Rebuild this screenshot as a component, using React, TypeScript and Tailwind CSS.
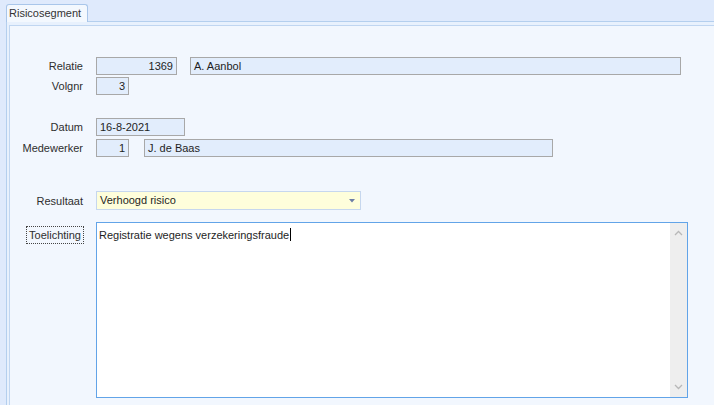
import React from "react";

const font = { fontFamily: '"Liberation Sans", Arial, sans-serif' };

function Label({ children }: { children: React.ReactNode }) {
  return (
    <div className="w-[74px] shrink-0 pr-[1px] text-right text-[11px] leading-[18px] text-[#2e2e2e]">
      {children}
    </div>
  );
}

function Box({
  w,
  align = "left",
  children,
  className = "",
}: {
  w: string;
  align?: "left" | "right";
  children: React.ReactNode;
  className?: string;
}) {
  return (
    <div
      className={`${w} h-[18px] shrink-0 border border-[#a8a8a8] bg-[#e2edfc] px-[3px] text-[11px] leading-[16px] text-[#1e1e1e] ${
        align === "right" ? "text-right" : "text-left"
      } ${className}`}
    >
      {children}
    </div>
  );
}

export default function App() {
  return (
    <div
      className="h-[405px] w-[714px] overflow-hidden bg-[#dfeafc] flex flex-col"
      style={font}
    >
      <div className="pl-[6px] pt-[4px] relative z-10">
        <div className="h-[18px] w-[82px] rounded-t-[3px] border border-b-0 border-[#a9c6ea] bg-[#f3f8fe] pl-[2px] text-[11px] leading-[16px] text-[#333]">
          Risicosegment
        </div>
      </div>
      <div className="-mt-[1px] ml-[6px] flex flex-1 flex-col border-l border-t border-[#b4cfee] bg-[#e8f1fd] pl-[2px] pt-[3px]">
        <div className="flex flex-1 flex-col border-l border-t border-[#c0d6f1] bg-[#f2f7fe]">
          {/* Relatie */}
          <div className="mt-[31px] flex items-center">
            <Label>Relatie</Label>
            <div className="w-[12px] shrink-0" />
            <Box w="w-[81px]" align="right">1369</Box>
            <div className="w-[13px] shrink-0" />
            <Box w="w-[491px]">A. Aanbol</Box>
          </div>
          {/* Volgnr */}
          <div className="mt-[2px] flex items-center">
            <Label>Volgnr</Label>
            <div className="w-[12px] shrink-0" />
            <Box w="w-[33px]" align="right">3</Box>
          </div>
          {/* Datum */}
          <div className="mt-[23px] flex items-center">
            <Label>Datum</Label>
            <div className="w-[12px] shrink-0" />
            <Box w="w-[89px]">16-8-2021</Box>
          </div>
          {/* Medewerker */}
          <div className="mt-[3px] flex items-center">
            <Label>Medewerker</Label>
            <div className="w-[12px] shrink-0" />
            <Box w="w-[33px]" align="right">1</Box>
            <div className="w-[15px] shrink-0" />
            <Box w="w-[409px]">J. de Baas</Box>
          </div>
          {/* Resultaat */}
          <div className="mt-[34px] flex items-center">
            <Label>Resultaat</Label>
            <div className="w-[12px] shrink-0" />
            <div className="flex h-[19px] w-[265px] shrink-0 items-center justify-between border border-[#c6d7ee] bg-[#fefedb] pl-[3px] pr-[5px] text-[11px] text-[#1e1e1e]">
              <span>Verhoogd risico</span>
              <svg width="6" height="4" viewBox="0 0 6 4">
                <path d="M0 0 H6 L3 3.5 Z" fill="#6c7da6" />
              </svg>
            </div>
          </div>
          {/* Toelichting */}
          <div className="mt-[12px] flex items-start">
            <div className="flex w-[74px] shrink-0 justify-end pt-[4px]">
              <div className="h-[18px] border border-dotted border-[#444] px-[2px] text-[11px] leading-[16px] text-[#2e2e2e]">
                Toelichting
              </div>
            </div>
            <div className="w-[12px] shrink-0" />
            <div className="flex h-[176px] w-[592px] shrink-0 border border-[#62a4e8] bg-white">
              <div className="flex-1 pl-[2px] pt-[5px] text-[11px] leading-[14px] text-[#1e1e1e]">
                Registratie wegens verzekeringsfraude
                <span className="ml-[1px] inline-block h-[13px] w-[1px] bg-black align-[-2px]" />
              </div>
              <div className="flex w-[17px] flex-col items-center justify-between bg-[#eeeeee] py-[7px]">
                <svg width="9" height="6" viewBox="0 0 9 6">
                  <path d="M1 5 L4.5 1.5 L8 5" stroke="#b8b8b8" strokeWidth="1.3" fill="none" />
                </svg>
                <svg width="9" height="6" viewBox="0 0 9 6">
                  <path d="M1 1 L4.5 4.5 L8 1" stroke="#b8b8b8" strokeWidth="1.3" fill="none" />
                </svg>
              </div>
            </div>
          </div>
        </div>
      </div>
    </div>
  );
}
